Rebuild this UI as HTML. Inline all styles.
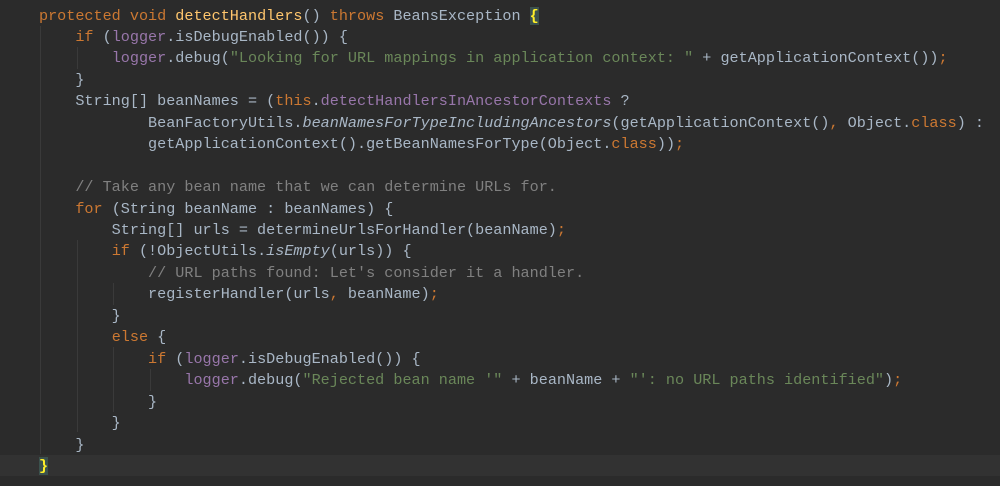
<!DOCTYPE html>
<html><head><meta charset="utf-8"><style>
html,body{margin:0;padding:0;width:1000px;height:486px;overflow:hidden;background:#2b2b2b;}
.cur{position:absolute;left:0;top:455px;width:1000px;height:21px;background:#323232;}
.g{position:absolute;width:1px;background:#3a3a3a;}
pre{position:absolute;left:39px;top:5.5px;margin:0;font-family:"Liberation Mono",monospace;font-size:15.15px;line-height:21.45px;color:#a9b7c6;}
.k{color:#cc7832}.m{color:#ffc66d}.f{color:#9876aa}.s{color:#6a8759}.c{color:#808080}.i{font-style:italic}
.b{color:#ffef28;background:#3b514d;font-weight:bold}
</style></head><body>
<div class="cur"></div>
<div class="g" style="left:40px;top:26px;height:428px"></div>
<div class="g" style="left:77px;top:47px;height:22px"></div>
<div class="g" style="left:77px;top:240px;height:192px"></div>
<div class="g" style="left:113px;top:283px;height:22px"></div>
<div class="g" style="left:113px;top:347px;height:65px"></div>
<div class="g" style="left:150px;top:369px;height:22px"></div>
<pre><span class="k">protected void </span><span class="m">detectHandlers</span>() <span class="k">throws </span>BeansException <span class="b">{</span>
    <span class="k">if </span>(<span class="f">logger</span>.isDebugEnabled()) {
        <span class="f">logger</span>.debug(<span class="s">"Looking for URL mappings in application context: "</span> + getApplicationContext())<span class="k">;</span>
    }
    String[] beanNames = (<span class="k">this</span>.<span class="f">detectHandlersInAncestorContexts</span> ?
            BeanFactoryUtils.<span class="i">beanNamesForTypeIncludingAncestors</span>(getApplicationContext()<span class="k">, </span>Object.<span class="k">class</span>) :
            getApplicationContext().getBeanNamesForType(Object.<span class="k">class</span>))<span class="k">;</span>

    <span class="c">// Take any bean name that we can determine URLs for.</span>
    <span class="k">for </span>(String beanName : beanNames) {
        String[] urls = determineUrlsForHandler(beanName)<span class="k">;</span>
        <span class="k">if </span>(!ObjectUtils.<span class="i">isEmpty</span>(urls)) {
            <span class="c">// URL paths found: Let's consider it a handler.</span>
            registerHandler(urls<span class="k">, </span>beanName)<span class="k">;</span>
        }
        <span class="k">else </span>{
            <span class="k">if </span>(<span class="f">logger</span>.isDebugEnabled()) {
                <span class="f">logger</span>.debug(<span class="s">"Rejected bean name '"</span> + beanName + <span class="s">"': no URL paths identified"</span>)<span class="k">;</span>
            }
        }
    }
<span class="b">}</span></pre>
</body></html>
